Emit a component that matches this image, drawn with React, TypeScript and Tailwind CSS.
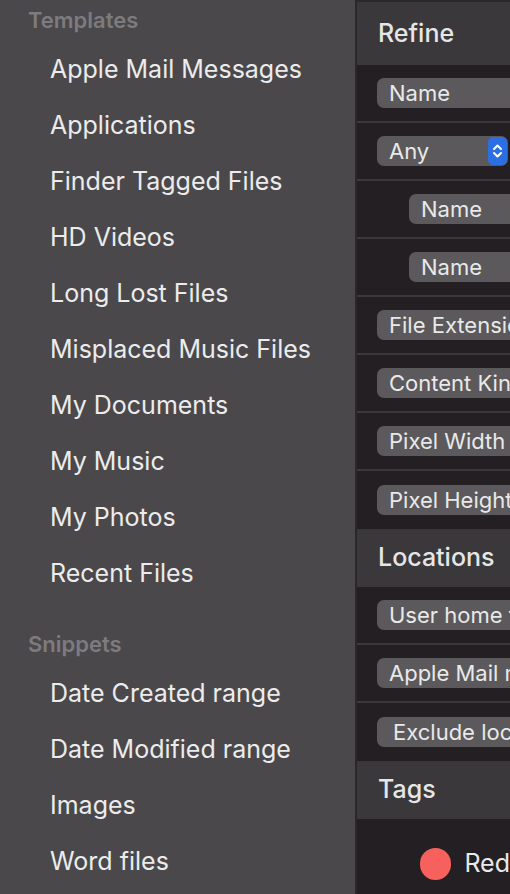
import React from 'react'

const templates = [
  'Apple Mail Messages',
  'Applications',
  'Finder Tagged Files',
  'HD Videos',
  'Long Lost Files',
  'Misplaced Music Files',
  'My Documents',
  'My Music',
  'My Photos',
  'Recent Files',
]

const snippets = ['Date Created range', 'Date Modified range', 'Images', 'Word files']

type Row = { label: string; nested?: boolean; stepper?: boolean; last?: boolean; pad?: string }

const refineRows: Row[] = [
  { label: 'Name' },
  { label: 'Any', stepper: true },
  { label: 'Name', nested: true },
  { label: 'Name', nested: true },
  { label: 'File Extension' },
  { label: 'Content Kind' },
  { label: 'Pixel Width' },
  { label: 'Pixel Height', last: true },
]

const locationRows: Row[] = [
  { label: 'User home folder' },
  { label: 'Apple Mail messages' },
  { label: 'Exclude locations', last: true, pad: 'pl-[16px]' },
]

function SectionHeader({ title }: { title: string }) {
  return (
    <div className="h-[58px] flex items-center bg-[#3a383b] pl-[21px] text-[25px] font-medium text-[#e6e6e6]">
      {title}
    </div>
  )
}

function Stepper() {
  return (
    <div className="absolute right-[1px] top-[1px] w-[19px] h-[28px] rounded-[5px] bg-[#2c6fe3] flex items-center justify-center">
      <svg width="11" height="18" viewBox="0 0 11 18" fill="none" stroke="white" strokeWidth="2" strokeLinecap="round" strokeLinejoin="round">
        <path d="M2 7 L5.5 3.5 L9 7" />
        <path d="M2 11 L5.5 14.5 L9 11" />
      </svg>
    </div>
  )
}

function PillRow({ row }: { row: Row }) {
  return (
    <div className={`h-[58px] flex items-center ${row.last ? '' : 'border-b-2 border-[#3a383b]'} ${row.nested ? 'pl-[52px]' : 'pl-[20px]'}`}>
      <div
        className={`relative h-[30px] rounded-[7px] bg-[#5b595c] flex items-center text-[22px] text-[#e9e9e9] whitespace-nowrap shrink-0 ${row.pad ?? 'pl-[12px]'} ${row.stepper ? 'w-[131px]' : 'w-[240px]'}`}
      >
        {row.label}
        {row.stepper && <Stepper />}
      </div>
    </div>
  )
}

export default function App() {
  return (
    <div
      className="w-[510px] h-[894px] flex overflow-hidden bg-[#4a484b]"
      style={{ fontFamily: 'Inter, "Noto Sans", sans-serif' }}
    >
      {/* Sidebar */}
      <div className="w-[355px] shrink-0 bg-[#4a484b]">
        <div className="h-[41px] flex items-center pl-[28px] text-[22px] font-semibold text-[#7d7b7e]">Templates</div>
        {templates.map((t) => (
          <div key={t} className="h-[56px] flex items-center pl-[50px] pt-[2px] text-[25px] text-[#ececec]">
            {t}
          </div>
        ))}
        <div className="mt-[22px] h-[42px] flex items-center pl-[28px] text-[22px] font-semibold text-[#7d7b7e]">Snippets</div>
        {snippets.map((t) => (
          <div key={t} className="h-[56px] flex items-center pl-[50px] pt-[2px] text-[25px] text-[#ececec]">
            {t}
          </div>
        ))}
      </div>

      {/* Right panel */}
      <div className="flex-1 border-l-2 border-[#2a282a] bg-[#231f22] overflow-hidden">
        <div className="h-[65px] border-t-2 border-[#2a282a] flex items-center bg-[#3a383b] pl-[21px] text-[25px] font-medium text-[#e6e6e6]">
          Refine
        </div>
        {refineRows.map((r, i) => (
          <PillRow key={i} row={r} />
        ))}
        <SectionHeader title="Locations" />
        {locationRows.map((r, i) => (
          <PillRow key={i} row={r} />
        ))}
        <SectionHeader title="Tags" />
        <div className="h-[90px] flex items-center pl-[63px] gap-[13px]">
          <div className="w-[32px] h-[32px] rounded-full bg-[#f6615d]" />
          <span className="text-[25px] text-[#e9e9e9]">Red</span>
        </div>
      </div>
    </div>
  )
}
